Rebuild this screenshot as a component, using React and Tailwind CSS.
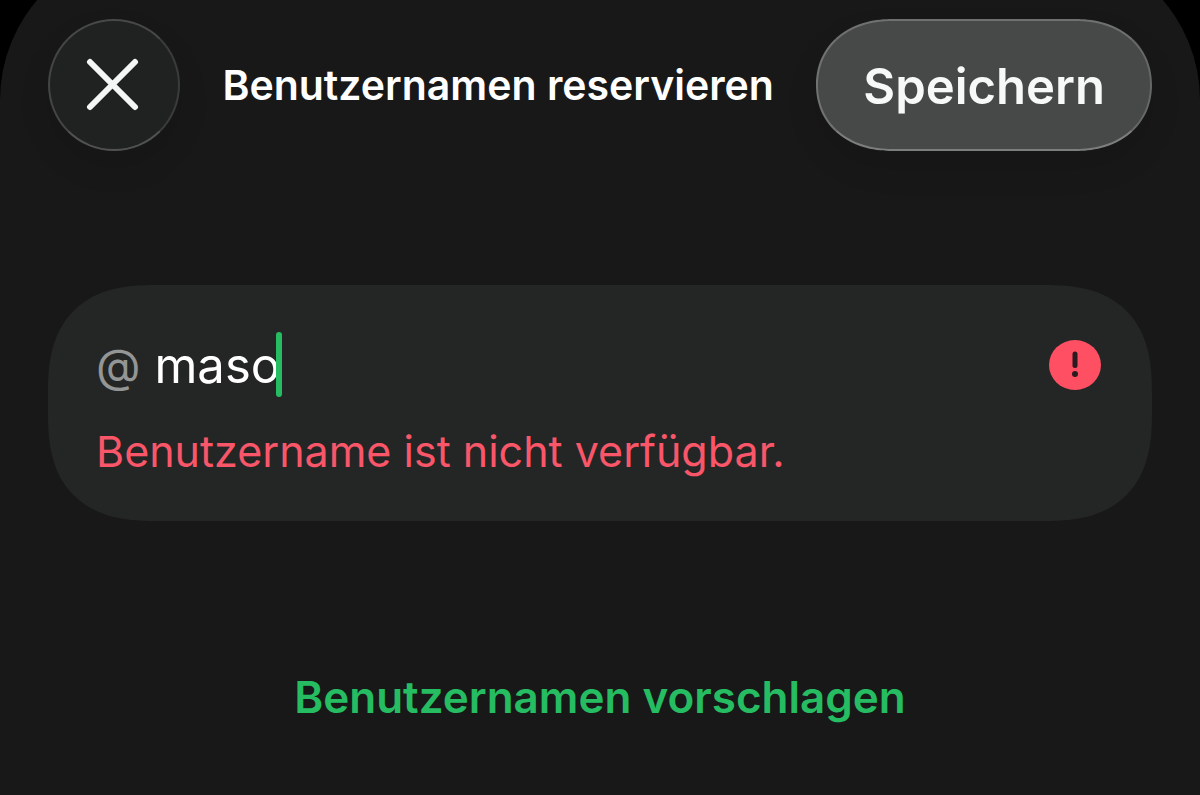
import React, { useState } from 'react';

const CloseIcon = () => (
  <svg className="h-14 w-14" viewBox="0 0 56 56" fill="none" aria-hidden="true">
    <path d="M4 5L49 50M49 5L4 50" stroke="#f4f6f5" strokeWidth="6" strokeLinecap="round" />
  </svg>
);

const ErrorIcon = () => (
  <svg className="h-13 w-13 shrink-0" viewBox="0 0 52 52" aria-hidden="true">
    <ellipse cx="26" cy="26" rx="26" ry="25" fill="#ff4f63" />
    <path d="M26 15V26.500" stroke="#2b1a20" strokeWidth="5" strokeLinecap="round" />
    <circle cx="26" cy="35" r="3" fill="#2b1a20" />
  </svg>
);

const Header = () => (
  <header className="flex items-center justify-between px-12">
    <button
      type="button"
      aria-label="Schließen"
      className="flex h-[132px] w-[132px] items-center justify-center rounded-full border-2 border-t-[#474848] border-r-[#3a3b3b] border-b-[#505151] border-l-[#444545] bg-[#202221] shadow-[0_16px_32px_rgba(0,0,0,0.1)]"
    >
      <CloseIcon />
    </button>
    <h1 className="text-[41px] leading-[60px] font-semibold whitespace-nowrap text-white">
      Benutzernamen reservieren
    </h1>
    <button
      type="button"
      className="h-[132px] rounded-full supports-[corner-shape:squircle]:rounded-[76px/66px] [corner-shape:superellipse(1.1)] border-2 border-t-[#6f7070] border-r-[#666767] border-b-[#7c7d7d] border-l-[#707171] bg-[#474948] px-[45px] pt-1 text-[49px] leading-[60px] font-semibold text-[#f7f8f8] shadow-[0_16px_32px_rgba(0,0,0,0.1)]"
    >
      Speichern
    </button>
  </header>
);

const UsernameField = () => {
  const [username, setUsername] = useState('maso');

  return (
    <div className="mx-12 mt-[134px] rounded-[80px] supports-[corner-shape:squircle]:rounded-[108px] [corner-shape:superellipse(1.35)] bg-[#242625] px-12 pt-[47px] pb-10">
      <div className="flex items-center">
        <label htmlFor="username" className="mr-3.5 text-[46px] leading-[60px] text-[#949595]">
          @
        </label>
        <input
          id="username"
          type="text"
          value={username}
          onChange={(e) => setUsername(e.target.value)}
          aria-invalid="true"
          aria-describedby="username-error"
          className="field-sizing-content pt-0.5 text-[49px] leading-[60px] text-white caret-transparent outline-none"
        />
        <span className="-ml-1 h-[65px] w-1.5 rounded-full bg-[#25bc62]" />
        <span className="ml-auto mr-[3px]">
          <ErrorIcon />
        </span>
      </div>
      <p id="username-error" className="mt-6 text-[43px] leading-[60px] text-[#f9566a]">
        Benutzername ist nicht verfügbar.
      </p>
    </div>
  );
};

export default function App() {
  return (
    <div className="min-h-screen overflow-hidden bg-black font-['Inter',sans-serif]">
      <main className="-mt-[53px] min-h-[calc(100vh+53px)] rounded-t-[153px] bg-[#181818] pt-18">
        <Header />
        <UsernameField />
        <div className="mt-[146px] flex justify-center pb-16">
          <button type="button" className="text-[44px] leading-[60px] font-semibold text-[#25bc62]">
            Benutzernamen vorschlagen
          </button>
        </div>
      </main>
    </div>
  );
}
